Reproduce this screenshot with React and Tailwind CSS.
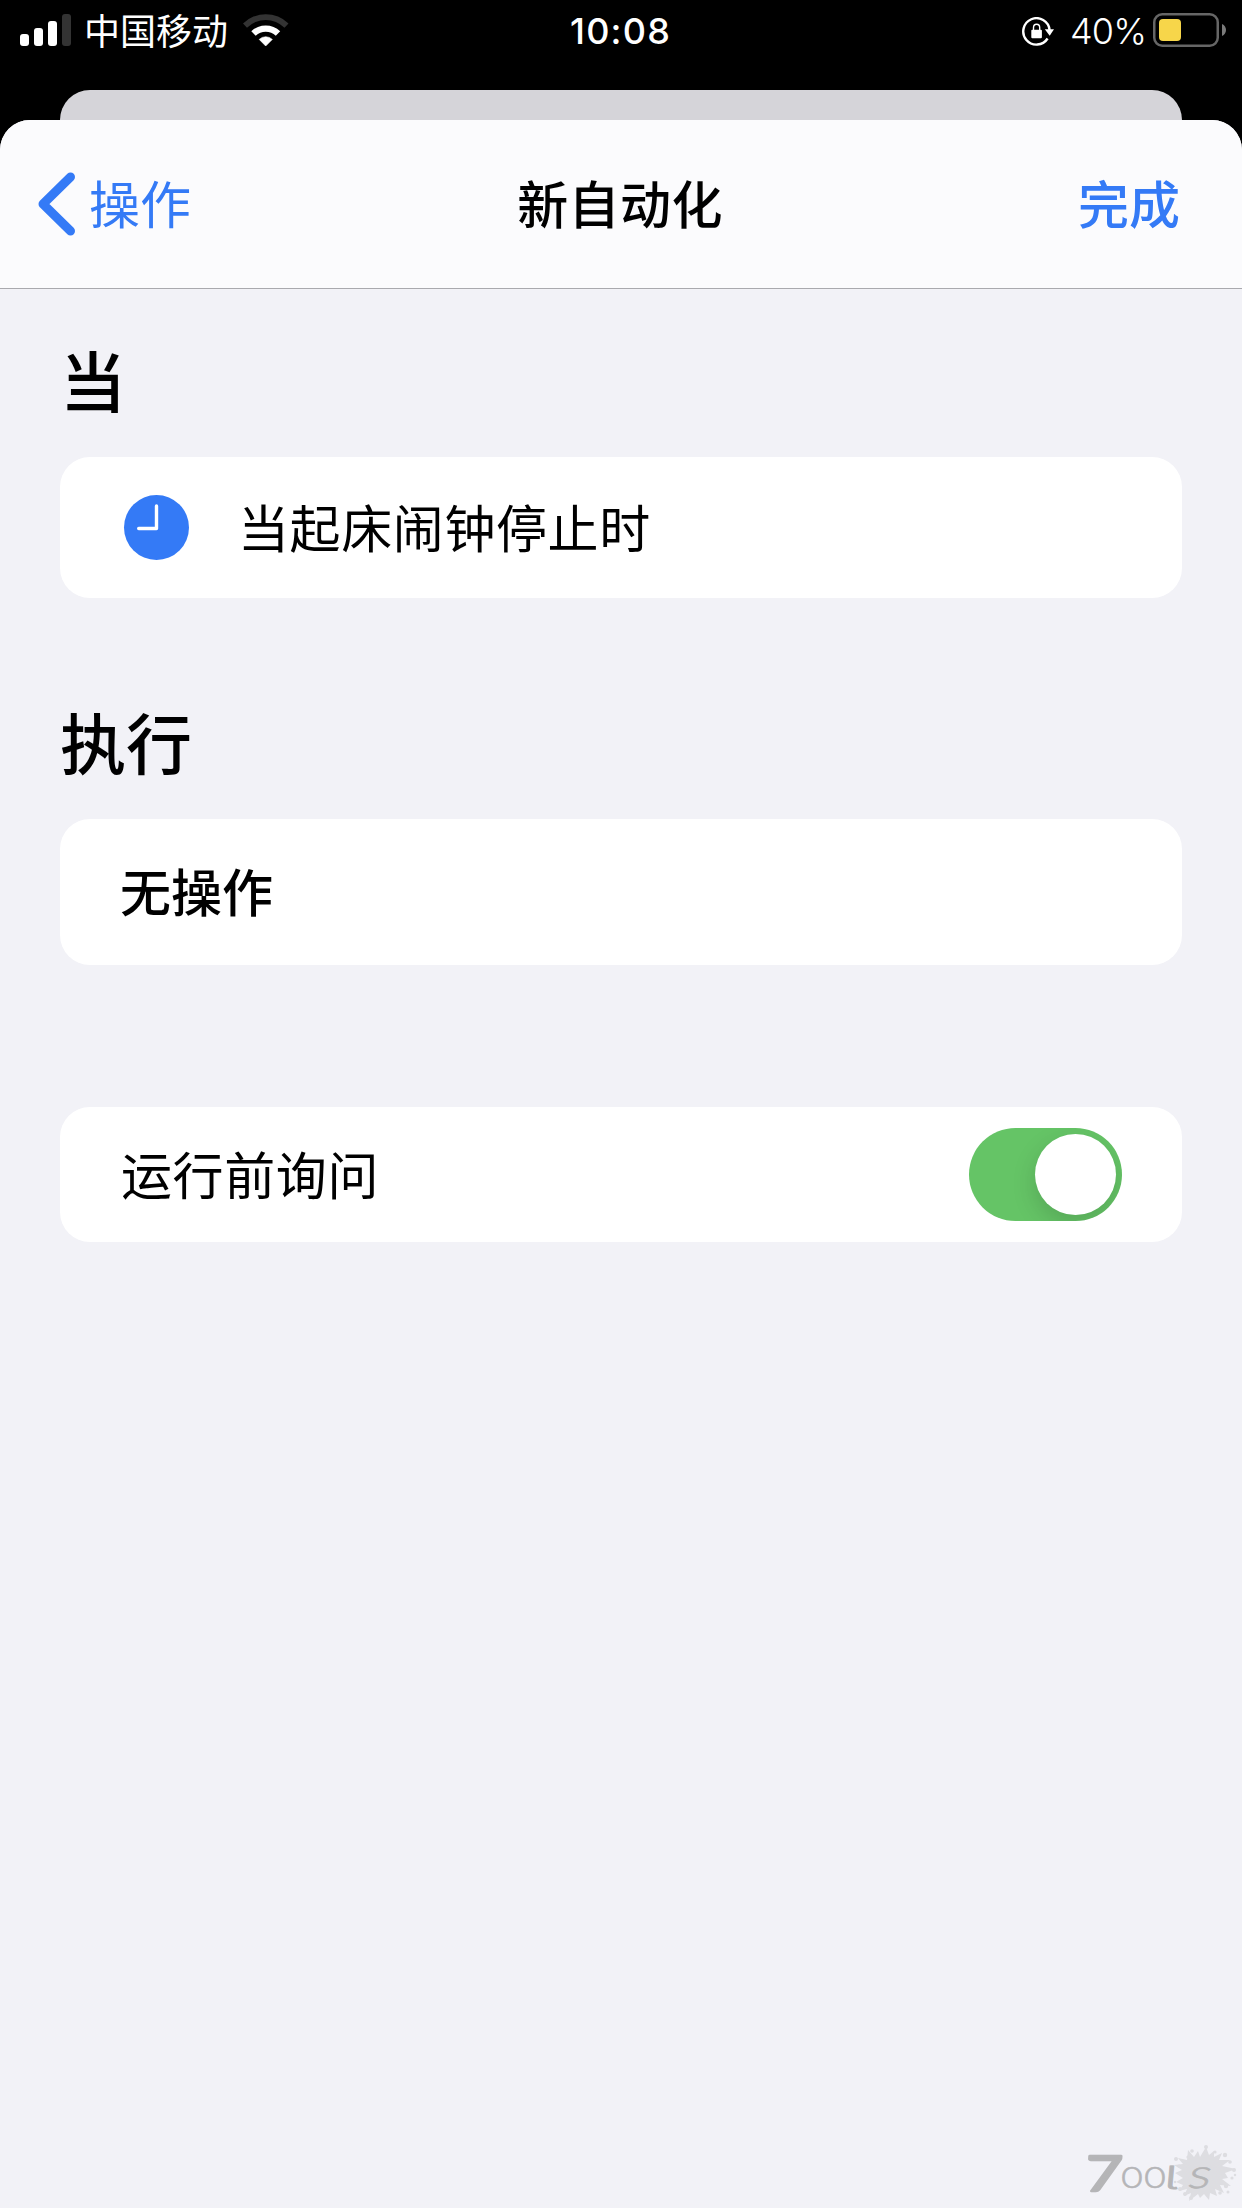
import React, { useState } from 'react';

const SignalBars = () => (
  <svg className="w-[52px] h-8" viewBox="0 0 52 32" fill="#fff">
    <rect x="0" y="20" width="9" height="12" rx="3" />
    <rect x="14" y="14" width="9" height="18" rx="3" />
    <rect x="28" y="7" width="9" height="25" rx="3" />
    <rect x="42" y="0" width="9" height="32" rx="3" fill="#333" />
  </svg>
);

const WifiIcon = () => (
  <svg className="w-[46px] h-[34px]" viewBox="0 0 46 34">
    <path d="M0 10.5A32.5 32.5 0 0 1 45.5 10.5L41.5 14.7A26.5 26.5 0 0 0 4 14.7Z" fill="#333" />
    <path d="M8.3 18.2A21 21 0 0 1 37.2 18.2L32.8 22.8A14.5 14.5 0 0 0 12.7 22.8Z" fill="#fff" />
    <path d="M16.2 26.4A9.4 9.4 0 0 1 29.3 26.4L22.7 33Z" fill="#fff" stroke="#fff" strokeWidth="0.6" strokeLinejoin="round" />
  </svg>
);

const RotationLockIcon = () => (
  <svg className="w-8 h-[30px]" viewBox="0 0 32 30" fill="none">
    <path d="M25.6 21.5A13.2 13.2 0 1 1 27.6 13" stroke="#fff" strokeWidth="2.4" />
    <path d="M22.8 12.2H32L27.7 18.8Z" fill="#fff" />
    <rect x="9.3" y="12.7" width="10.6" height="8.6" rx="1" fill="#fff" />
    <path d="M11.5 13V10.8A3.1 3.5 0 0 1 17.7 10.8V13" stroke="#fff" strokeWidth="1.4" />
  </svg>
);

const BatteryIcon = () => (
  <svg className="w-[73px] h-[34px]" viewBox="0 0 73 34">
    <rect x="1.25" y="1.25" width="63.5" height="31.5" rx="8" fill="none" stroke="#666" strokeWidth="2.5" />
    <rect x="6" y="6" width="22" height="22" rx="4" fill="#f7d64a" />
    <path d="M69 11C71.6 12.2 73 14.4 73 17S71.6 21.8 69 23Z" fill="#7a7a7a" />
  </svg>
);

const ClockIcon = () => (
  <svg className="w-[66px] h-[66px]" viewBox="0 0 66 66" fill="none">
    <circle cx="33.5" cy="32.5" r="32.5" fill="#347af6" />
    <path d="M33.5 11V33.5H15.7" stroke="#fff" strokeWidth="3.4" strokeLinecap="round" strokeLinejoin="round" />
  </svg>
);

const splatDots = [
  [114, 31, 2], [117, 38, 1.5], [118, 61, 2], [113, 54, 1.2], [123, 66, 2], [126, 29, 1.6],
  [163, 27, 2.2], [168, 34, 1.8], [172, 42, 2], [170, 50, 1.6], [164, 58, 2.2], [158, 65, 1.8],
  [153, 24, 1.6], [144, 19, 2], [130, 23, 1.8], [129, 70, 2], [166, 64, 1.5], [173, 47, 1.2],
];

const Watermark = () => (
  <svg className="w-[180px] h-20" viewBox="0 0 180 80">
    <g fill="#dddde1">
      <path d="M144 19L147 27L152 23L152 29L160 25L157 32L168 32L160 38L174 41L163 45L166 50L160 51L169 58L158 57L162 65L153 61L155 68L148 65L147 72L142 66L138 70L136 66L127 73L129 65L122 68L125 61L117 63L121 57L114 54L121 50L113 45L120 42L112 37L121 36L116 30L125 32L126 22L132 29L136 23L138 29Z" />
      {splatDots.map(([x, y, r], i) => (
        <circle key={i} cx={x} cy={y} r={r} />
      ))}
    </g>
    <g fill="#b5b5b7" stroke="#b5b5b7" strokeWidth="0.6">
      <text transform="translate(22 63) skewX(-4) scale(1.3 1)" fontFamily="Lato, sans-serif" fontWeight="400" fontSize="49" strokeLinejoin="round" strokeWidth="2.5">7</text>
      <text x="70" y="60" textAnchor="middle" fontFamily="Lato, sans-serif" fontSize="42" fontWeight="300">o</text>
      <text x="93" y="60" textAnchor="middle" fontFamily="Lato, sans-serif" fontSize="42" fontWeight="300">o</text>
      <text
        transform="translate(101.5 61) skewX(-5) scale(1.7 1)"
        fontFamily="Inter, sans-serif"
        fontSize="32"
        fontWeight="300"
        className="[font-feature-settings:'cv05']"
      >
        l
      </text>
      <text transform="translate(124 59.5) skewX(-14) scale(1.3 1)" fontFamily="Lato, sans-serif" fontSize="41" fontWeight="300">s</text>
    </g>
  </svg>
);

const StatusBar = () => (
  <div className="grid grid-cols-3 h-[60px] pl-5 pr-[16px] text-white">
    <div className="flex items-start">
      <div className="pt-[14px]"><SignalBars /></div>
      <span className="ml-3 mt-[4px] text-[36px] leading-[50px]">中国移动</span>
      <div className="ml-[15px] pt-[13px]"><WifiIcon /></div>
    </div>
    <div className="-ml-[5px] text-center font-[Inter] font-medium text-[36px] leading-[62px] tracking-[1.2px]">10:08</div>
    <div className="flex items-start justify-end">
      <div className="pt-[17px]"><RotationLockIcon /></div>
      <span className="ml-[16px] font-[Inter] font-light text-[36px] leading-[63px] tracking-[-0.9px]">40%</span>
      <div className="ml-[7px] pt-[13px]"><BatteryIcon /></div>
    </div>
  </div>
);

const NavBar = () => (
  <div className="grid grid-cols-3 items-center h-[169px] pl-[38px] pr-[62px] border-b border-[#a9a9ae] bg-[#fbfbfd] rounded-t-[30px] text-[51px] leading-[60px]">
    <button className="flex items-center text-[#347af6]">
      <svg className="w-[38px] h-16" viewBox="0 0 38 64" fill="none">
        <path d="M32.5 5L5 32L32.5 59" stroke="currentColor" strokeWidth="9" strokeLinecap="round" strokeLinejoin="round" />
      </svg>
      <span className="ml-[13px] -mt-1">操作</span>
    </button>
    <h1 className="-mt-1 ml-[22px] text-center font-medium whitespace-nowrap tracking-[0.4px]">新自动化</h1>
    <button className="-mt-1 text-right font-medium text-[#347af6]">完成</button>
  </div>
);

const SectionTitle = ({ children }) => (
  <h2 className="text-[66px] leading-[80px] font-medium">{children}</h2>
);

const Card = ({ className = '', children }) => (
  <div className={`flex items-center rounded-[30px] bg-white text-[51px] leading-[60px] ${className}`}>
    {children}
  </div>
);

const Toggle = ({ checked, onChange }) => (
  <button
    role="switch"
    aria-checked={checked}
    onClick={() => onChange(!checked)}
    className={`flex items-center w-[153px] h-[93px] p-1.5 rounded-full overflow-hidden ${checked ? 'justify-end bg-[#65c466]' : 'justify-start bg-[#e9e9eb]'}`}
  >
    <span className="w-[81px] h-[81px] rounded-full bg-white shadow-[0_9px_24px_rgba(0,0,0,0.15)]" />
  </button>
);

export default function App() {
  const [askBeforeRunning, setAskBeforeRunning] = useState(true);

  return (
    <div className="flex flex-col w-[1242px] h-[2208px] overflow-hidden bg-black text-black font-['Noto_Sans_CJK_SC',sans-serif]">
      <StatusBar />

      {/* Edge of the sheet behind */}
      <div className="mx-[60px] mt-[30px] h-[60px] shrink-0 rounded-t-[30px] bg-[#d5d4d9]" />

      <div className="-mt-[30px] flex flex-col flex-1 rounded-t-[30px] bg-[#f2f2f7]">
        <NavBar />

        <div className="flex flex-col flex-1 px-[60px] pt-[49px]">
          <SectionTitle>当</SectionTitle>
          <Card className="mt-[39px] h-[141px] pl-[63px]">
            <ClockIcon />
            <span className="ml-[49px] -mt-1 tracking-[0.6px]">当起床闹钟停止时</span>
          </Card>

          <div className="mt-[102px]">
            <SectionTitle>执行</SectionTitle>
          </div>
          <Card className="mt-[39px] h-[146px] pl-[60px]">
            <span className="-mt-1 font-medium">无操作</span>
          </Card>

          <Card className="mt-[142px] h-[135px] pl-[61px] pr-[60px] justify-between">
            <span className="-mt-1 tracking-[0.6px]">运行前询问</span>
            <Toggle checked={askBeforeRunning} onChange={setAskBeforeRunning} />
          </Card>
        </div>

        <div className="flex justify-end">
          <Watermark />
        </div>
      </div>
    </div>
  );
}
